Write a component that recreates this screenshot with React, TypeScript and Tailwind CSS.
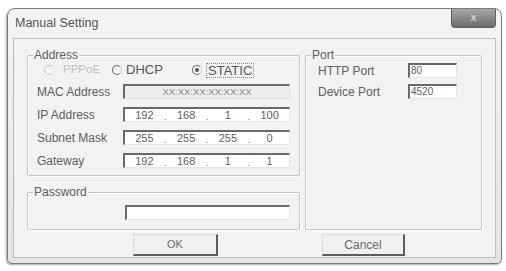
import React from 'react'

const sunken =
  'border-t-2 border-l-2 border-r border-b border-t-[#6a6a6a] border-l-[#6a6a6a] border-r-[#e4e4e4] border-b-[#e4e4e4]'

const Radio = ({ checked, disabled }: { checked?: boolean; disabled?: boolean }) => (
  <span
    className={`flex h-[10px] w-[10px] shrink-0 items-center justify-center rounded-full border ${
      disabled ? 'border-[#c8c8c8] border-r-[#ececec]' : 'border-[#6f6f6f] border-r-[#d8d8d8]'
    }`}
  >
    {checked && <span className="h-[4px] w-[4px] rounded-full bg-[#5a5a5a]" />}
  </span>
)

const GroupBox = ({
  label,
  className,
  children,
}: {
  label: string
  className?: string
  children?: React.ReactNode
}) => (
  <div
    className={`relative rounded-[2px] border border-[#c4c4c4] shadow-[inset_1px_1px_0_#ffffff,1px_1px_0_#ffffff] ${className ?? ''}`}
  >
    <span className="absolute left-[5px] top-[-8px] bg-[#f2f2f2] px-[1px] text-[12px] leading-[14px] text-[#5e5e5e]">
      {label}
    </span>
    {children}
  </div>
)

const IpBox = ({ parts }: { parts: string[] }) => (
  <div className={`flex h-[15px] w-[167px] items-center bg-white text-[11px] leading-none text-[#606060] ${sunken}`}>
    {parts.map((p, i) => (
      <React.Fragment key={i}>
        <span className="flex-1 text-center">{p}</span>
        {i < 3 && <span className="pt-[3px] text-[#888]">.</span>}
      </React.Fragment>
    ))}
  </div>
)

const Row = ({ label, children }: { label: string; children: React.ReactNode }) => (
  <div className="flex h-[15px] items-center">
    <span className="w-[86px] text-[12px] text-[#5e5e5e]">{label}</span>
    {children}
  </div>
)

export default function App() {
  return (
    <div className="h-[271px] w-[506px] overflow-hidden bg-white pl-[7px] pt-[8px] font-['Liberation_Sans',Arial,sans-serif] text-[#5e5e5e]">
      <div className="relative h-[256px] w-[495px] rounded-t-[8px] rounded-b-[5px] border border-[#7a7a7a] bg-gradient-to-b from-[#f4f4f4] via-[#ebebeb] to-[#e4e4e4] shadow-[-1px_1px_2px_rgba(0,0,0,0.35)]">
        <div className="flex h-[29px] items-center pl-[7px] text-[12.5px] text-[#555]">Manual Setting</div>
        <div className="absolute right-[5px] top-0 flex h-[19px] w-[45px] items-center justify-center rounded-b-[4px] border border-t-0 border-[#606060] bg-gradient-to-b from-[#a8a8a8] to-[#6c6c6c] pb-[2px] text-[11px] text-[#ececec]">
          x
        </div>

        <div className="mx-[5px] h-[220px] border border-[#bdbdbd] bg-[#f2f2f2] pl-[13px] pt-[16px]">
          <div className="flex gap-[5px]">
            <div className="w-[273px]">
              <GroupBox label="Address" className="h-[121px] pt-[7px]">
                <div className="flex h-[14px] items-center pl-[16px] text-[13px]">
                  <div className="flex w-[68px] items-center gap-[9px] text-[11.5px] text-[#c0c0c0]">
                    <Radio disabled />
                    <span>PPPoE</span>
                  </div>
                  <div className="flex w-[80px] items-center gap-[4px] text-[#555]">
                    <Radio />
                    <span>DHCP</span>
                  </div>
                  <div className="flex items-center gap-[4px] text-[#555]">
                    <Radio checked />
                    <span className="border border-dotted border-[#888] px-[1px] leading-[13px]">STATIC</span>
                  </div>
                </div>
                <div className="mt-[7px] flex flex-col gap-[8px] pl-[9px]">
                  <Row label="MAC Address">
                    <div
                      className={`flex h-[15px] w-[167px] items-center justify-center bg-[#ececec] text-[9.5px] leading-none text-[#8a8a8a] ${sunken}`}
                    >
                      XX:XX:XX:XX:XX:XX
                    </div>
                  </Row>
                  <Row label="IP Address">
                    <IpBox parts={['192', '168', '1', '100']} />
                  </Row>
                  <Row label="Subnet Mask">
                    <IpBox parts={['255', '255', '255', '0']} />
                  </Row>
                  <Row label="Gateway">
                    <IpBox parts={['192', '168', '1', '1']} />
                  </Row>
                </div>
              </GroupBox>

              <GroupBox label="Password" className="mt-[16px] h-[38px] pl-[97px] pt-[12px]">
                <div className={`h-[15px] w-[165px] bg-white ${sunken}`} />
              </GroupBox>
            </div>

            <GroupBox label="Port" className="h-[175px] w-[177px] pl-[12px] pt-[7px]">
              <div className="flex flex-col gap-[6px]">
                <div className="flex h-[15px] items-center">
                  <span className="w-[90px] text-[12px] text-[#5e5e5e]">HTTP Port</span>
                  <div className={`flex h-[15px] w-[49px] items-center bg-white pl-[1px] text-[10px] leading-none text-[#606060] ${sunken}`}>
                    80
                  </div>
                </div>
                <div className="flex h-[15px] items-center">
                  <span className="w-[90px] text-[12px] text-[#5e5e5e]">Device Port</span>
                  <div className={`flex h-[15px] w-[49px] items-center bg-white pl-[1px] text-[10px] leading-none text-[#606060] ${sunken}`}>
                    4520
                  </div>
                </div>
              </div>
            </GroupBox>
          </div>

          <div className="mt-[4px] flex pl-[106px]">
            <button className="flex h-[22px] w-[85px] items-center justify-center border border-t-[#d8d8d8] border-l-[#d8d8d8] border-r-2 border-b-2 border-r-[#5c5c5c] border-b-[#5c5c5c] bg-[#f0f0f0] text-[11px] text-[#6a6a6a]">
              OK
            </button>
            <button className="ml-[104px] flex h-[22px] w-[83px] items-center justify-center border border-t-[#d8d8d8] border-l-[#d8d8d8] border-r-2 border-b-2 border-r-[#5c5c5c] border-b-[#5c5c5c] bg-[#f0f0f0] text-[12px] text-[#6a6a6a]">
              Cancel
            </button>
          </div>
        </div>
      </div>
    </div>
  )
}
